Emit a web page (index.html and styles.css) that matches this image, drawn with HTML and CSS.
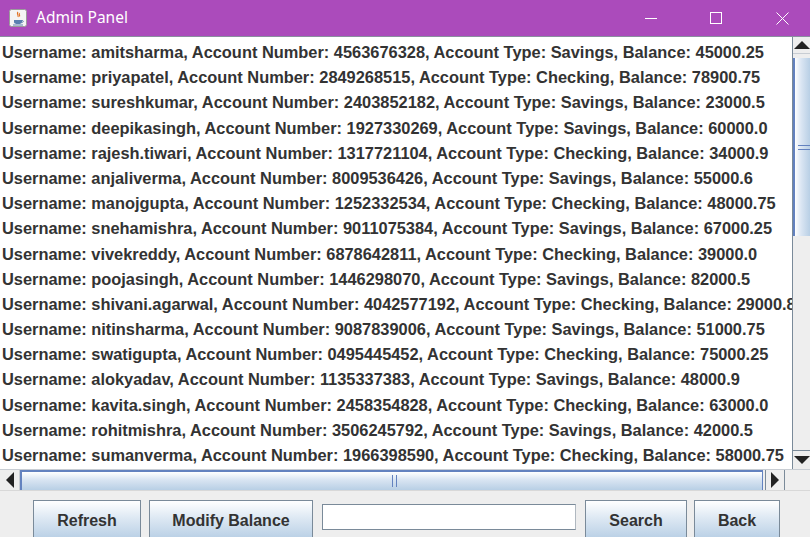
FILE: index.html
```html
<!DOCTYPE html>
<html>
<head>
<meta charset="utf-8">
<link rel="stylesheet" href="styles.css">
</head>
<body>
<div class="window">
  <div class="titlebar">
    <div class="app-icon">
      <svg width="18" height="18" viewBox="0 0 18 18">
        <rect x="0.5" y="0.5" width="17" height="17" rx="2" fill="#f4f4f4" stroke="#9a9a9a"/>
        <path d="M5 11 h8 v2 c0 1.5 -1.5 2 -4 2 s-4 -0.5 -4 -2z" fill="#5a7fb0"/>
        <path d="M13 11.5 c1.5 0 1.8 1.5 0.3 2" stroke="#5a7fb0" fill="none"/>
        <path d="M9 3 c-2 2 1 3 0 5 M10.5 4 c-1.2 1.5 0.8 2 0 3.5" stroke="#e07020" stroke-width="1.1" fill="none"/>
        <rect x="4" y="15.5" width="10" height="1" fill="#5a7fb0"/>
      </svg>
    </div>
    <div class="title">Admin Panel</div>
    <div class="controls">
      <div class="ctl c-min"><svg width="12" height="12" viewBox="0 0 12 12"><path d="M0 6.5h12" stroke="#fff" stroke-width="1"/></svg></div>
      <div class="ctl c-max"><svg width="12" height="12" viewBox="0 0 12 12"><rect x="0.5" y="0.5" width="11" height="11" fill="none" stroke="#fff" stroke-width="1"/></svg></div>
      <div class="ctl c-close"><svg width="13" height="13" viewBox="0 0 13 13"><path d="M0.5 0.5L12.5 12.5M12.5 0.5L0.5 12.5" stroke="#fff" stroke-width="1"/></svg></div>
    </div>
  </div>
  <div class="scrollpane">
    <div class="viewport-row">
      <div class="viewport">
        <div class="list">
          <div class="row">Username: amitsharma, Account Number: 4563676328, Account Type: Savings, Balance: 45000.25</div>
          <div class="row">Username: priyapatel, Account Number: 2849268515, Account Type: Checking, Balance: 78900.75</div>
          <div class="row">Username: sureshkumar, Account Number: 2403852182, Account Type: Savings, Balance: 23000.5</div>
          <div class="row">Username: deepikasingh, Account Number: 1927330269, Account Type: Savings, Balance: 60000.0</div>
          <div class="row">Username: rajesh.tiwari, Account Number: 1317721104, Account Type: Checking, Balance: 34000.9</div>
          <div class="row">Username: anjaliverma, Account Number: 8009536426, Account Type: Savings, Balance: 55000.6</div>
          <div class="row">Username: manojgupta, Account Number: 1252332534, Account Type: Checking, Balance: 48000.75</div>
          <div class="row">Username: snehamishra, Account Number: 9011075384, Account Type: Savings, Balance: 67000.25</div>
          <div class="row">Username: vivekreddy, Account Number: 6878642811, Account Type: Checking, Balance: 39000.0</div>
          <div class="row">Username: poojasingh, Account Number: 1446298070, Account Type: Savings, Balance: 82000.5</div>
          <div class="row">Username: shivani.agarwal, Account Number: 4042577192, Account Type: Checking, Balance: 29000.8</div>
          <div class="row">Username: nitinsharma, Account Number: 9087839006, Account Type: Savings, Balance: 51000.75</div>
          <div class="row">Username: swatigupta, Account Number: 0495445452, Account Type: Checking, Balance: 75000.25</div>
          <div class="row">Username: alokyadav, Account Number: 1135337383, Account Type: Savings, Balance: 48000.9</div>
          <div class="row">Username: kavita.singh, Account Number: 2458354828, Account Type: Checking, Balance: 63000.0</div>
          <div class="row">Username: rohitmishra, Account Number: 3506245792, Account Type: Savings, Balance: 42000.5</div>
          <div class="row">Username: sumanverma, Account Number: 1966398590, Account Type: Checking, Balance: 58000.75</div>
        </div>
      </div>
      <div class="vscroll">
        <div class="arrow-btn"><span class="tri up"></span></div>
        <div class="vtrack">
          <div class="vthumb"><span class="vgrip"></span></div>
        </div>
        <div class="arrow-btn"><span class="tri down"></span></div>
      </div>
    </div>
    <div class="hscroll">
      <div class="harrow"><span class="tri left"></span></div>
      <div class="htrack">
        <div class="hthumb"><span class="hgrip"></span></div>
      </div>
      <div class="harrow"><span class="tri right"></span></div>
      <div class="corner"></div>
    </div>
  </div>
  <div class="bottom">
    <button class="btn b-refresh">Refresh</button>
    <button class="btn b-modify">Modify Balance</button>
    <input class="field" type="text">
    <button class="btn b-search">Search</button>
    <button class="btn b-back">Back</button>
  </div>
</div>
</body>
</html>
```
FILE: styles.css
```css
* { box-sizing: border-box; }
html, body { margin: 0; padding: 0; }
body { width: 810px; height: 537px; overflow: hidden; background: #eeeeee; font-family: "Liberation Sans", Arial, sans-serif; }
.window { display: flex; flex-direction: column; width: 810px; height: 537px; }
.titlebar { height: 37px; background: #ab4bbb; display: flex; align-items: center; color: #fff; border-bottom: 1px solid #8a8fa0; flex: none; }
.app-icon { width: 18px; height: 18px; margin-left: 9px; margin-right: 9px; display: flex; }
.title { font-family: "Noto Sans", "Segoe UI", sans-serif; font-size: 15.5px; flex: 1; margin-top: -2px; }
.controls { display: flex; height: 100%; }
.ctl { width: 46px; display: flex; align-items: center; justify-content: center; }
.c-max { margin-left: 19px; }
.c-close { margin-left: 20px; margin-right: 5px; }
.scrollpane { display: flex; flex-direction: column; flex: none; }
.viewport-row { display: flex; height: 432px; }
.viewport { flex: 1; background: #fff; overflow: hidden; border-right: 1px solid #7a8a99; }
.list { padding-top: 3px; padding-left: 2px; white-space: nowrap; }
.row { height: 25.2px; line-height: 25px; font-weight: bold; font-size: 16.4px; color: #333333; }
.vscroll { width: 17px; display: flex; flex-direction: column; background: #eeeeee; }
.arrow-btn { height: 17px; display: flex; align-items: center; justify-content: center; background: #eeeeee; border-bottom: 1px solid #c8cdd3; }
.arrow-btn:last-child { border-bottom: none; border-top: 1px solid #7a8a99; height: 19px; }
.vtrack { flex: 1; padding-top: 4px; }
.vthumb { height: 178px; background: linear-gradient(to right, #ffffff, #dbe6f3 40%, #b8cfe5); border-left: 2px solid #6382bf; display: flex; align-items: center; justify-content: flex-end; }
.vgrip { width: 12px; height: 5px; border-top: 1px solid #6382bf; border-bottom: 1px solid #6382bf; }
.tri { width: 0; height: 0; display: block; }
.tri.up { border-left: 8px solid transparent; border-right: 8px solid transparent; border-bottom: 8px solid #222; }
.tri.down { border-left: 8px solid transparent; border-right: 8px solid transparent; border-top: 8px solid #222; }
.tri.left { border-top: 8px solid transparent; border-bottom: 8px solid transparent; border-right: 8px solid #222; }
.tri.right { border-top: 8px solid transparent; border-bottom: 8px solid transparent; border-left: 8px solid #222; }
.hscroll { height: 22px; display: flex; border-top: 1px solid #c8cdd3; border-bottom: 1px solid #d8d8d8; background: #eeeeee; }
.harrow { width: 20px; display: flex; align-items: center; justify-content: center; }
.harrow:first-child { border-right: 1px solid #c8cdd3; }
.harrow:nth-child(3) { border-left: 1px solid #7a8a99; border-right: 1px solid #7a8a99; }
.htrack { flex: 1; display: flex; }
.hthumb { flex: 1; background: linear-gradient(to bottom, #ffffff, #dbe6f3 40%, #b8cfe5); border-left: 2px solid #6382bf; border-top: 2px solid #6382bf; display: flex; align-items: center; justify-content: center; margin-right: 2px; border-right: 1px solid #6382bf; }
.hgrip { width: 5px; height: 12px; border-left: 1px solid #6382bf; border-right: 1px solid #6382bf; margin-left: 4px; }
.corner { width: 25px; }
.bottom { flex: 1; display: flex; align-items: flex-start; padding-top: 9px; padding-left: 33px; }
.btn { height: 40px; background: linear-gradient(to bottom, #ffffff, #dde8f3 45%, #b8cfe5); border: 1px solid #7a8a99; font-family: "Liberation Sans", Arial, sans-serif; font-weight: bold; font-size: 16px; color: #333; padding: 0; margin: 0; padding-top: 2px; }
.b-refresh { width: 108px; }
.b-modify { width: 164px; margin-left: 8px; }
.field { width: 254px; height: 26px; margin-left: 9px; margin-top: 4px; border: 1px solid #7a8a99; border-right-color: #b0b8c0; border-bottom-color: #7a8a99; background: #fff; box-shadow: inset 1px 1px 0 #fff; }
.b-search { width: 102px; margin-left: 9px; }
.b-back { width: 86px; margin-left: 7px; }
```
